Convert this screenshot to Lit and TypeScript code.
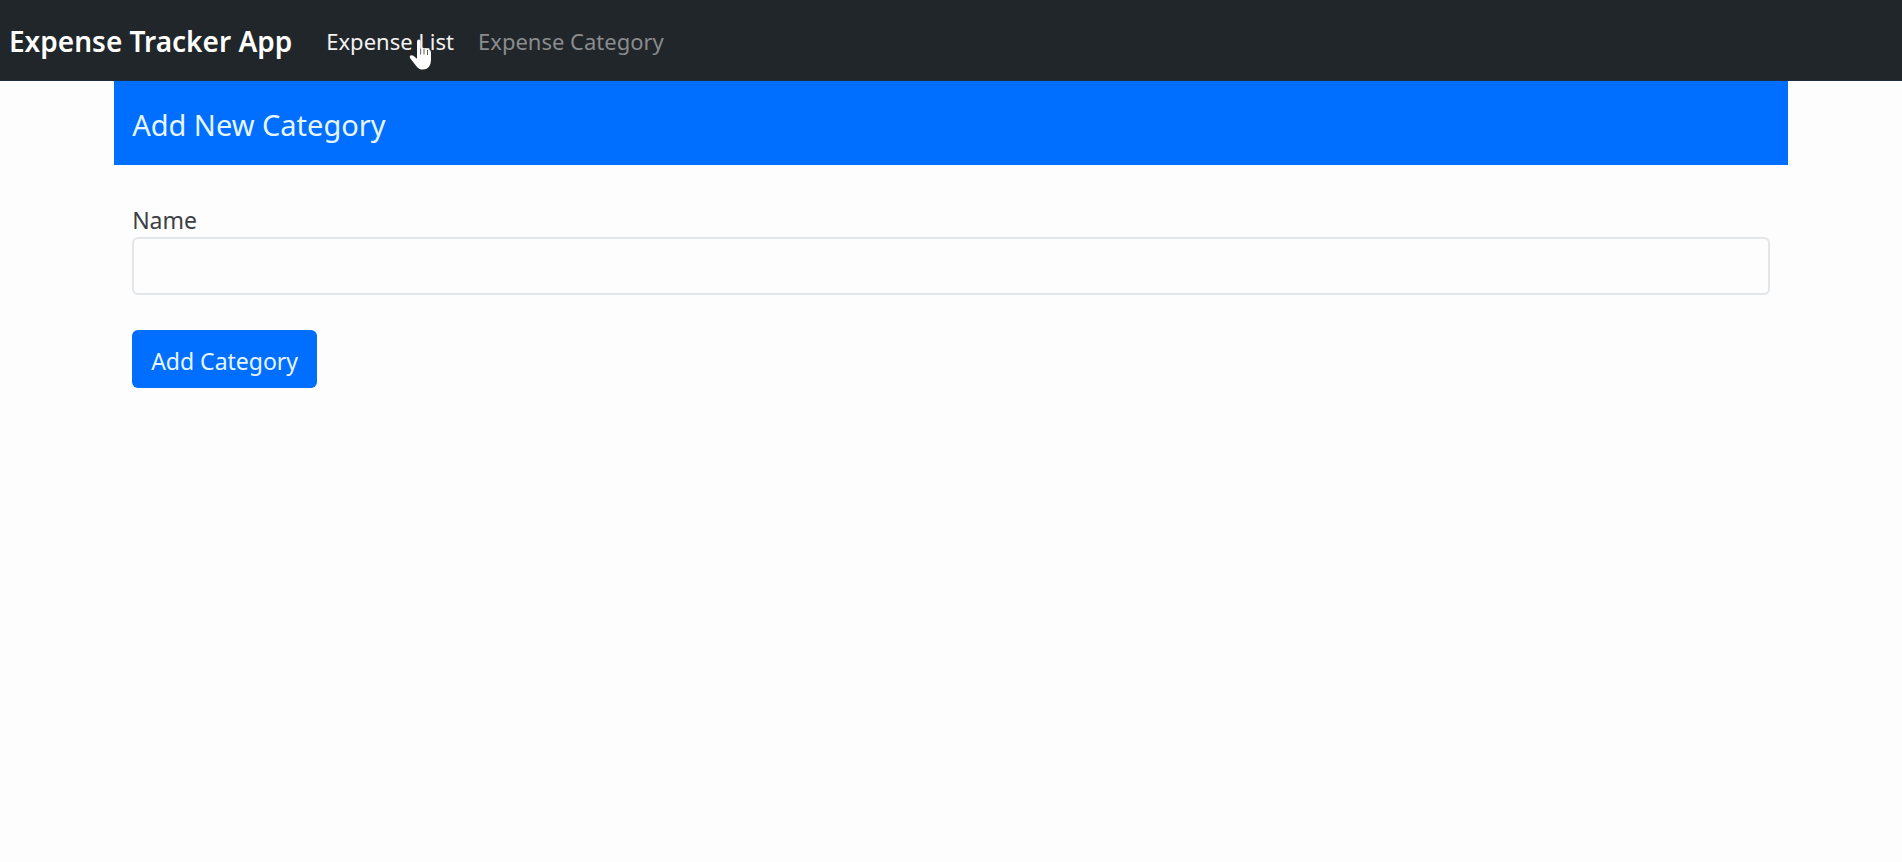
import { LitElement, html, css } from "lit";
import { customElement, state } from "lit/decorators.js";

@customElement("app-root")
export class AppRoot extends LitElement {
  @state() private name = "";

  static styles = css`
    :host {
      display: block;
      min-height: 100vh;
      box-sizing: border-box;
      background: #fdfdfd;
      color: #3b4045;
      font-family: "Segoe UI", "Noto Sans", sans-serif;
      font-size: 23px;
      line-height: 36px;
    }
    *,
    *::before,
    *::after {
      box-sizing: border-box;
    }
    .navbar {
      display: flex;
      align-items: center;
      gap: 34px;
      min-height: 81px;
      padding: 2px 9px 0;
      background: #202629;
      border-bottom: 1px solid #1c2c3c;
    }
    .brand {
      color: #fff;
      font-size: 28px;
      font-weight: 600;
      text-decoration: none;
    }
    .links {
      display: flex;
      gap: 24px;
      margin: 0;
      padding: 0;
      font-size: 22px;
      list-style: none;
    }
    .link {
      color: #8a8c8e;
      text-decoration: none;
    }
    .link.active {
      color: #f2f2f2;
    }
    .hovered {
      position: relative;
    }
    .pointer {
      position: absolute;
      top: 16px;
      right: 21px;
      width: 24px;
      height: 31px;
      pointer-events: none;
    }
    .container {
      width: 88%;
      margin: 0 auto;
    }
    .heading {
      margin: 0;
      padding: 26px 18px 22px;
      background: #006eff;
      color: #e6f6ff;
      font-size: 29px;
      font-weight: 400;
      line-height: 36px;
    }
    .form {
      display: flex;
      flex-direction: column;
      align-items: flex-start;
      padding: 38px 18px;
    }
    .label {
      line-height: 34px;
    }
    .field {
      width: 100%;
      height: 58px;
      margin-bottom: 35px;
      padding: 8px 16px;
      border: 2px solid #e3e6e8;
      border-radius: 6px;
      background: #fdfdfd;
      color: inherit;
      font: inherit;
    }
    .submit {
      height: 58px;
      padding: 4px 19px 0;
      border: 0;
      border-radius: 6px;
      background: #006eff;
      color: #e6f6ff;
      font: inherit;
    }
  `;

  private onInput(e: Event) {
    this.name = (e.target as HTMLInputElement).value;
  }

  private onSubmit(e: Event) {
    e.preventDefault();
    this.name = "";
  }

  render() {
    return html`
      <nav class="navbar">
        <a class="brand" href="#">Expense Tracker App</a>
        <ul class="links">
          <li class="hovered">
            <a class="link active" href="#expenses">Expense List</a>
            <svg class="pointer" viewBox="0 0 24 31" aria-hidden="true">
              <path
                fill="#fff"
                d="M8 2.5Q8 .5 9.8 .5Q11.6 .5 11.6 2.5V9.5Q12 8.4 13.4 8.6Q14.8 8.8 14.9 10.3Q15.4 9.2 16.8 9.5Q18.2 9.8 18.4 11.3Q19 10.5 20.2 10.8Q21.8 11.2 22 13V21Q22 25.5 19.8 28Q17.6 30.5 13.8 30.5Q9.8 30.5 7.6 27.4L1 19Q.2 17.6 1.4 16.6Q2.8 15.7 4.4 16.8L8 19.8Z"
              />
              <path
                fill="none"
                stroke="#34373b"
                stroke-width=".8"
                d="M11.6 9.5V15.5M15 10V15.5M18.5 11V16"
              />
            </svg>
          </li>
          <li><a class="link" href="#categories">Expense Category</a></li>
        </ul>
      </nav>
      <main class="container">
        <h1 class="heading">Add New Category</h1>
        <form class="form" @submit=${this.onSubmit}>
          <label class="label" for="name">Name</label>
          <input class="field" id="name" type="text" .value=${this.name} @input=${this.onInput} />
          <button class="submit" type="submit">Add Category</button>
        </form>
      </main>
    `;
  }
}
